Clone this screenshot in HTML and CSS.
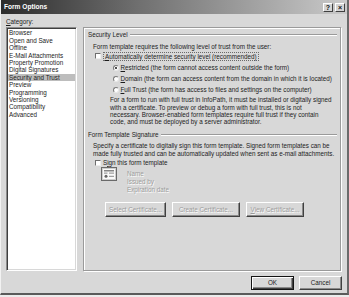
FILE: index.html
```html
<!DOCTYPE html>
<html>
<head>
<meta charset="utf-8">
<title>Form Options</title>
<link rel="stylesheet" href="styles.css">
</head>
<body>
<div class="dialog">
  <div class="titlebar">
    <span class="title">Form Options</span>
    <div class="tbtns"><span class="tbtn">?</span><span class="tbtn">×</span></div>
  </div>
  <div class="main">
    <div class="left">
      <div class="cat-label"><u>C</u>ategory:</div>
      <ul class="list">
        <li>Browser</li>
        <li>Open and Save</li>
        <li>Offline</li>
        <li>E-Mail Attachments</li>
        <li>Property Promotion</li>
        <li>Digital Signatures</li>
        <li class="sel">Security and Trust</li>
        <li>Preview</li>
        <li>Programming</li>
        <li>Versioning</li>
        <li>Compatibility</li>
        <li>Advanced</li>
      </ul>
    </div>
    <div class="panel">
      <div class="ghead"><span>Security Level</span><span class="etch"></span></div>
      <p class="req">Form template requires the following level of trust from the user:</p>
      <div class="check-row auto"><span class="cbox"></span><span class="focus"><u>A</u>utomatically determine security level (recommended)</span></div>
      <div class="radio-row r1"><span class="radio on"></span><span><u>R</u>estricted (the form cannot access content outside the form)</span></div>
      <div class="radio-row"><span class="radio"></span><span><u>D</u>omain (the form can access content from the domain in which it is located)</span></div>
      <div class="radio-row"><span class="radio"></span><span><u>F</u>ull Trust (the form has access to files and settings on the computer)</span></div>
      <p class="para">For a form to run with full trust in InfoPath, it must be installed or digitally signed<br>with a certificate. To preview or debug a form with full trust, this is not<br>necessary. Browser-enabled form templates require full trust if they contain<br>code, and must be deployed by a server administrator.</p>
      <div class="ghead sig"><span>Form Template Signature</span><span class="etch"></span></div>
      <p class="spec">Specify a certificate to digitally sign this form template. Signed form templates can be<br>made fully trusted and can be automatically updated when sent as e-mail attachments.</p>
      <div class="check-row sign"><span class="cbox"></span><span>S<u>i</u>gn this form template</span></div>
      <div class="cert">
        <svg class="cert-icon" width="16" height="14" viewBox="0 0 16 14">
          <rect x="0.5" y="0.5" width="15" height="13" fill="#fafafa" stroke="#6a6a6a" stroke-width="1"/>
          <rect x="1.5" y="1.5" width="13" height="11" fill="none" stroke="#8a8a8a" stroke-width="0.8" stroke-dasharray="1 1"/>
          <rect x="3" y="3.2" width="10" height="1.2" fill="#6a6a6a"/>
          <rect x="3" y="5.6" width="3.5" height="1" fill="#8a8a8a"/>
          <rect x="8" y="5.6" width="5" height="1" fill="#8a8a8a"/>
          <circle cx="5" cy="9.3" r="1.5" fill="#666"/>
          <rect x="8" y="8.8" width="5" height="1" fill="#8a8a8a"/>
        </svg>
        <div class="cert-lines"><div>Name</div><div>Issued by</div><div>Expiration date</div></div>
      </div>
      <div class="cert-btns">
        <span class="btn dis w-sel">Select Certificate...</span>
        <span class="btn dis w-cre">Create Certificate...</span>
        <span class="btn dis w-view"><u>V</u>iew Certificate...</span>
      </div>
    </div>
  </div>
  <div class="footer">
    <span class="btn fbtn default">OK</span>
    <span class="btn fbtn">Cancel</span>
  </div>
</div>
</body>
</html>
```
FILE: styles.css
```css
* { box-sizing: border-box; margin: 0; padding: 0; }
html, body { width: 349px; height: 297px; overflow: hidden; background: #ececec; }
body {
  font-family: "Liberation Sans", Arial, sans-serif;
  font-size: 6.3px;
  line-height: 7.4px;
  color: #1c1c1c;
}
u { text-decoration: underline; text-underline-offset: 1px; }

.dialog {
  width: 349px;
  height: 295px;
  background: #d8d8d8;
  border-left: 1px solid #f2f2f2;
  border-right: 2px solid #6a6a6a;
  border-bottom: 2px solid #5a5a5a;
  display: flex;
  flex-direction: column;
}

.titlebar {
  height: 14px;
  flex: none;
  display: flex;
  align-items: center;
  justify-content: space-between;
  padding: 0 2px 0 3px;
  background: linear-gradient(to right, #2c2c2c 0%, #707070 40%, #cacaca 100%);
}
.title {
  color: #fff;
  font-weight: bold;
  font-size: 6.6px;
  line-height: 14px;
}
.tbtns { display: flex; gap: 2px; }
.tbtn {
  width: 10px;
  height: 9px;
  background: #d4d4d4;
  border: 1px solid;
  border-color: #fff #404040 #404040 #fff;
  font-size: 7px;
  line-height: 7px;
  font-weight: bold;
  text-align: center;
  color: #111;
}

.main {
  height: 257px;
  flex: none;
  display: flex;
  gap: 6px;
  padding: 2px 6px 0 5px;
}
.left { width: 71px; flex: none; display: flex; flex-direction: column; }
.cat-label { line-height: 11px; height: 11px; }
.list {
  list-style: none;
  height: 244px;
  background: #fff;
  border: 1px solid;
  border-color: #8a8a8a #fff #fff #8a8a8a;
  box-shadow: inset 1px 1px 0 #3e3e3e, inset -1px -1px 0 #d8d8d8;
  padding: 1.3px 1px 0 1px;
}
.list li { padding-left: 1px; white-space: nowrap; }
.list li.sel { background: #bdbdbd; }

.panel {
  flex: 1;
  margin-top: 11px;
  height: 244px;
  border: 1px solid #9a9a9a;
  box-shadow: inset 1px 1px 0 #fff, 1px 1px 0 #fff;
  padding: 3.3px 3px 0 4px;
  white-space: nowrap;
}
.ghead { display: flex; align-items: center; gap: 2px; height: 7.4px; }
.etch { flex: 1; height: 2px; border-top: 1px solid #9a9a9a; border-bottom: 1px solid #fff; }
.req { margin-top: 4.1px; padding-left: 5px; }

.check-row { display: flex; align-items: center; height: 7.4px; padding-left: 7px; gap: 2px; }
.check-row.auto { margin-top: 2.6px; }
.cbox {
  width: 6px; height: 6px; flex: none;
  background: #fff;
  border: 1px solid;
  border-color: #6e6e6e #eee #eee #6e6e6e;
}
.focus {
  display: block;
  height: 9px;
  line-height: 7px;
  padding: 0 1px;
  border: 1px dotted #6a6a6a;
}

.radio-row { display: flex; align-items: center; height: 7.4px; padding-left: 25px; gap: 1.5px; margin-top: 3.7px; }
.radio-row.r1 { margin-top: 3.9px; }
.radio {
  width: 6px; height: 6px; flex: none;
  border-radius: 50%;
  background: #fff;
  border: 1px solid;
  border-color: #7a7a7a #e8e8e8 #e8e8e8 #7a7a7a;
  position: relative;
}
.radio.on::after {
  content: "";
  position: absolute;
  left: 1px; top: 1px;
  width: 2px; height: 2px;
  border-radius: 50%;
  background: #111;
}

.para { margin-top: 2.6px; padding-left: 22px; }
.ghead.sig { margin-top: 5.4px; }
.spec { margin-top: 3.6px; padding-left: 5px; }
.check-row.sign { margin-top: 2.2px; }

.cert { display: flex; gap: 10px; padding-left: 13px; margin-top: 0.3px; }
.cert-icon { display: block; flex: none; }
.cert-lines { padding-top: 3px; line-height: 8px; color: #9c9c9c; text-shadow: 0.7px 0.7px 0 #fff; }

.cert-btns { display: flex; gap: 6px; padding-left: 17px; margin-top: 8px; }
.btn {
  display: flex;
  align-items: center;
  justify-content: center;
  background: #d8d8d8;
  border: 1px solid;
  border-color: #fff #404040 #404040 #fff;
  box-shadow: inset -1px -1px 0 #8a8a8a;
  height: 15px;
  white-space: nowrap;
}
.btn.dis { color: #9c9c9c; text-shadow: 0.7px 0.7px 0 #fff; }
.w-sel { width: 61px; }
.w-cre { width: 68px; }
.w-view { width: 58px; }

.footer {
  display: flex;
  justify-content: flex-end;
  gap: 5px;
  padding: 5px 5px 0 0;
}
.fbtn { width: 43px; height: 14px; }
.fbtn.default {
  border: 1px solid #141414;
  box-shadow: inset 1px 1px 0 #fff, inset -1px -1px 0 #404040, inset -2px -2px 0 #8a8a8a;
}
```
